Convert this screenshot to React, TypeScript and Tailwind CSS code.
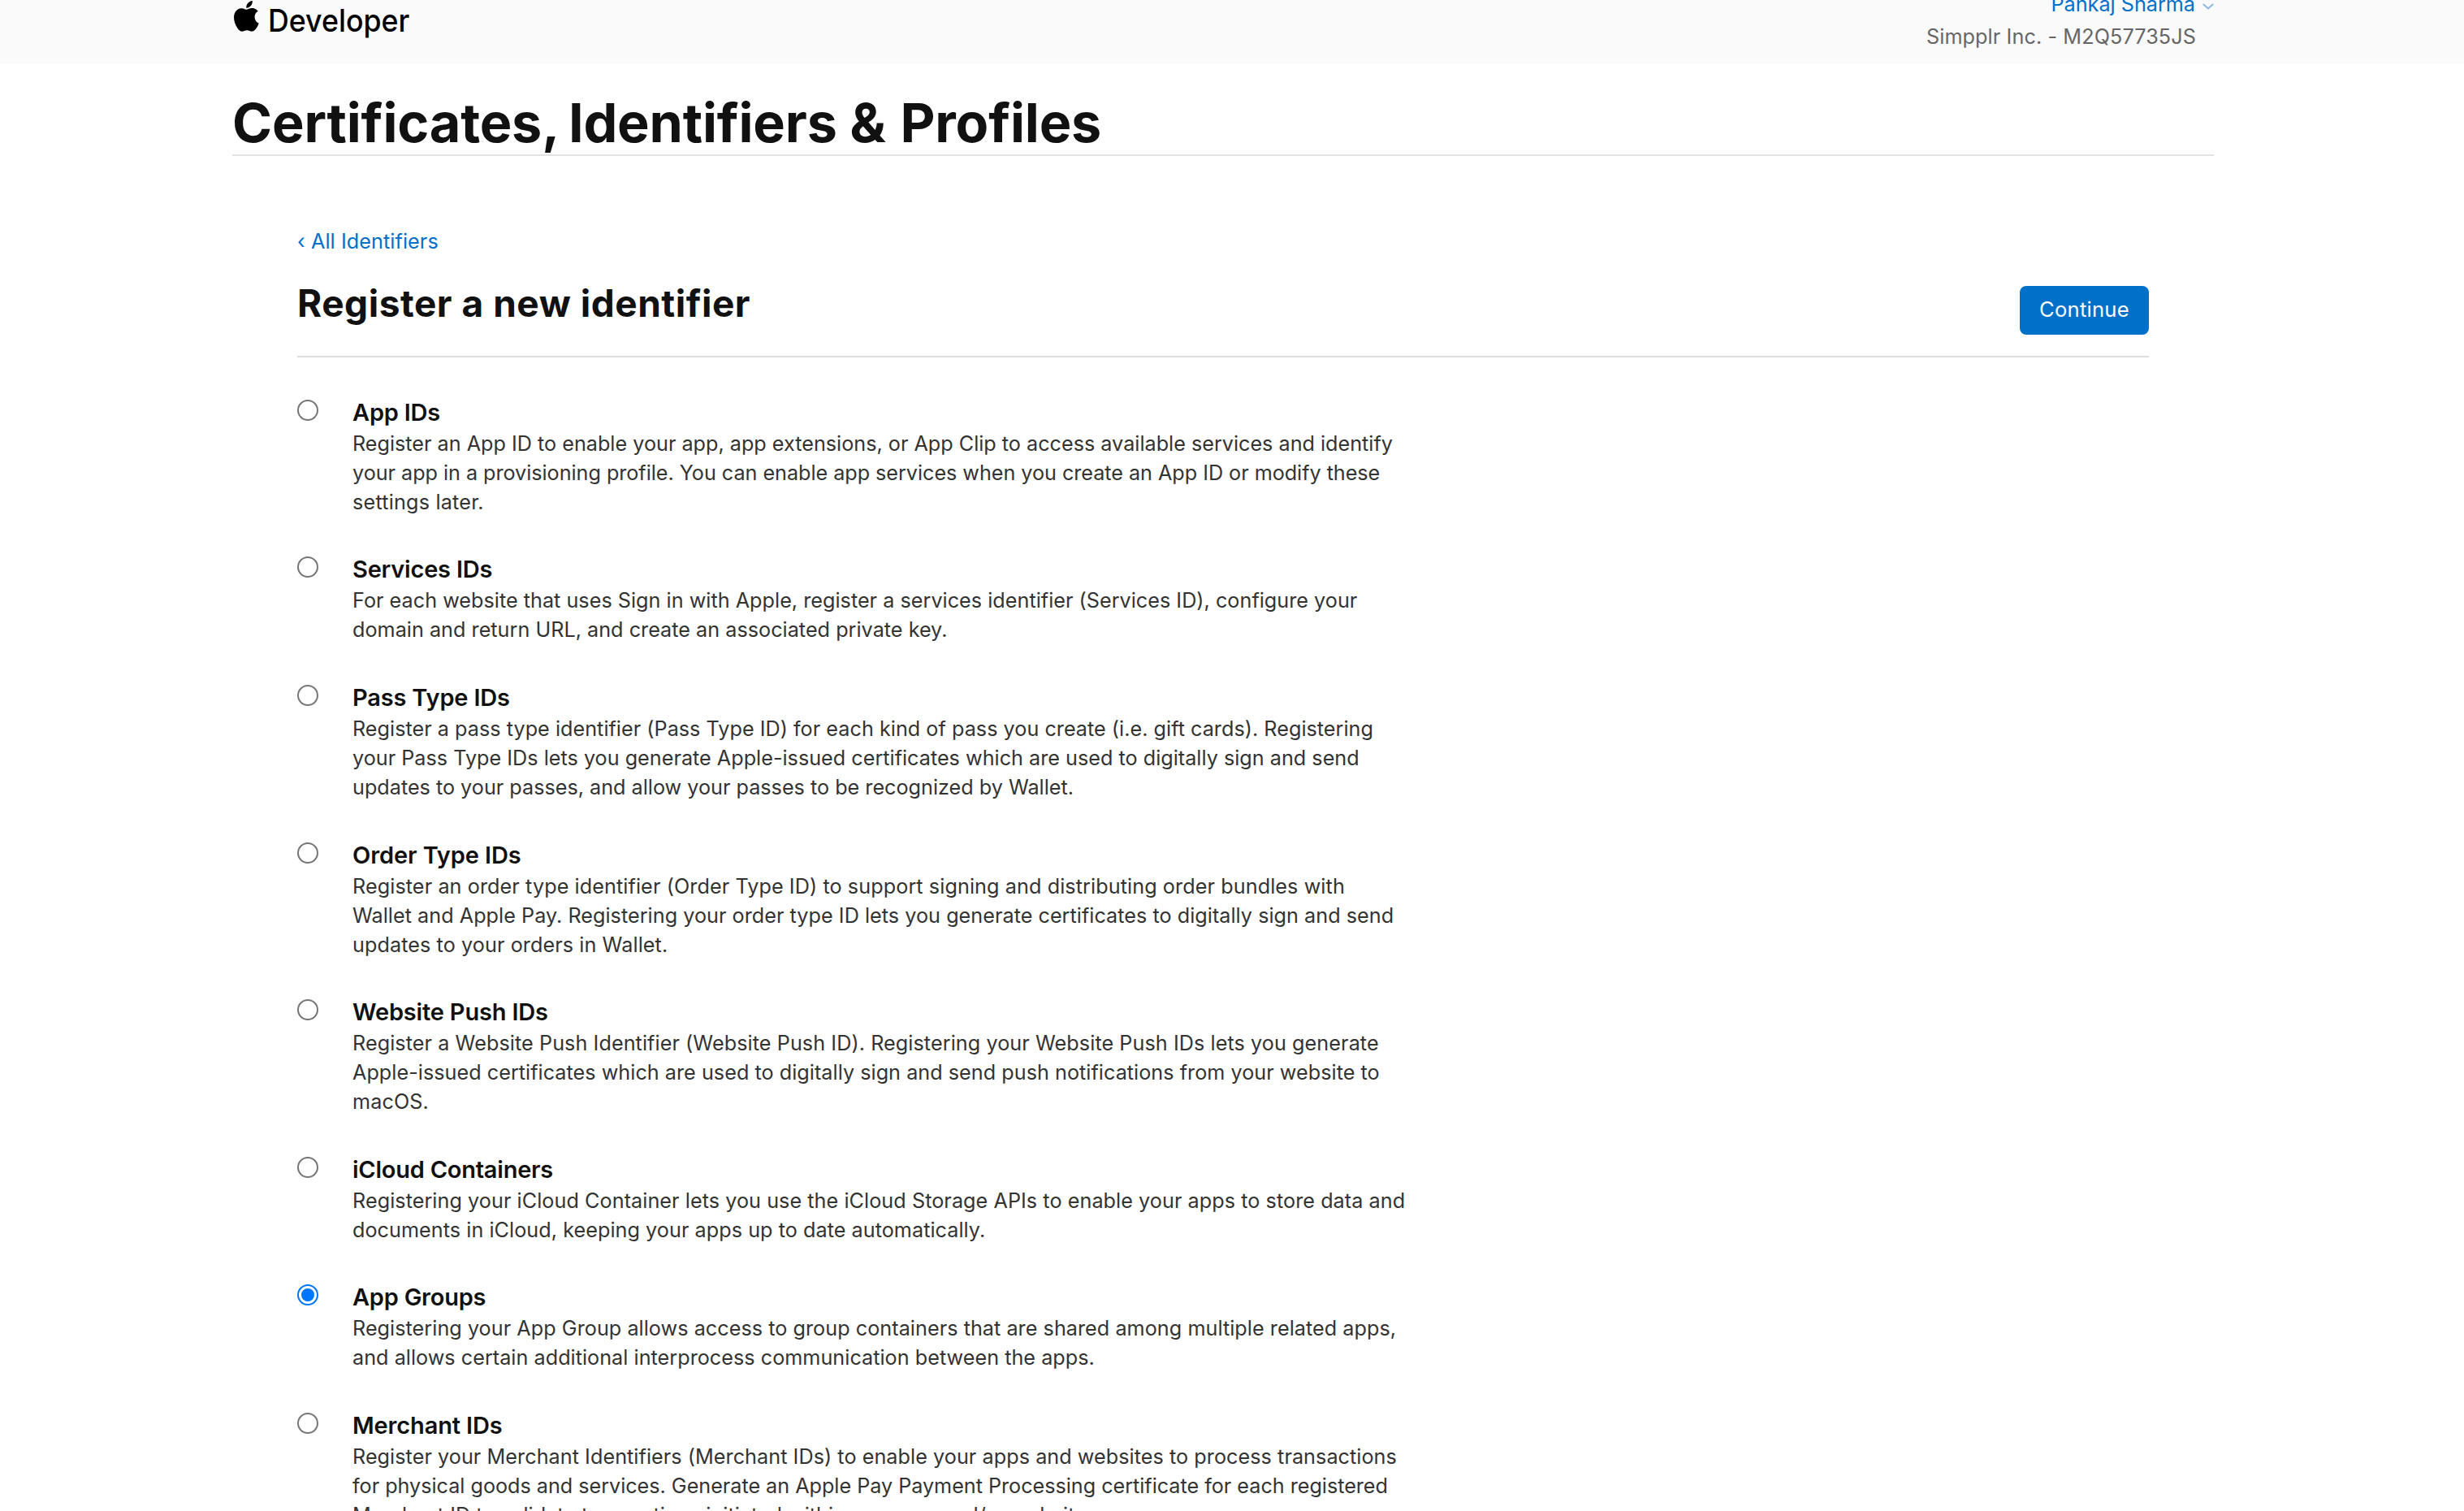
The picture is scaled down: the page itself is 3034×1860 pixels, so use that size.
import React, { useState } from "react";

type Line = { text: string; tracking?: string };
type Option = { title: string; titleTracking: string; lines: Line[] };

const OPTIONS: Option[] = [
  {
    title: "App IDs",
    titleTracking: "tracking-[-0.22px]",
    lines: [
      { text: "Register an App ID to enable your app, app extensions, or App Clip to access available services and identify" },
      { text: "your app in a provisioning profile. You can enable app services when you create an App ID or modify these", tracking: "tracking-[-0.035px]" },
      { text: "settings later.", tracking: "tracking-[0.2px]" },
    ],
  },
  {
    title: "Services IDs",
    titleTracking: "tracking-[-0.22px]",
    lines: [
      { text: "For each website that uses Sign in with Apple, register a services identifier (Services ID), configure your", tracking: "tracking-[0.02px]" },
      { text: "domain and return URL, and create an associated private key.", tracking: "tracking-[0.02px]" },
    ],
  },
  {
    title: "Pass Type IDs",
    titleTracking: "tracking-[-0.18px]",
    lines: [
      { text: "Register a pass type identifier (Pass Type ID) for each kind of pass you create (i.e. gift cards). Registering", tracking: "tracking-[0.025px]" },
      { text: "your Pass Type IDs lets you generate Apple-issued certificates which are used to digitally sign and send", tracking: "tracking-[0.01px]" },
      { text: "updates to your passes, and allow your passes to be recognized by Wallet." },
    ],
  },
  {
    title: "Order Type IDs",
    titleTracking: "tracking-[-0.1px]",
    lines: [
      { text: "Register an order type identifier (Order Type ID) to support signing and distributing order bundles with", tracking: "tracking-[0.085px]" },
      { text: "Wallet and Apple Pay. Registering your order type ID lets you generate certificates to digitally sign and send", tracking: "tracking-[0.03px]" },
      { text: "updates to your orders in Wallet.", tracking: "tracking-[0.08px]" },
    ],
  },
  {
    title: "Website Push IDs",
    titleTracking: "tracking-[-0.18px]",
    lines: [
      { text: "Register a Website Push Identifier (Website Push ID). Registering your Website Push IDs lets you generate", tracking: "tracking-[0.07px]" },
      { text: "Apple-issued certificates which are used to digitally sign and send push notifications from your website to", tracking: "tracking-[0.03px]" },
      { text: "macOS.", tracking: "tracking-[0.1px]" },
    ],
  },
  {
    title: "iCloud Containers",
    titleTracking: "tracking-[-0.24px]",
    lines: [
      { text: "Registering your iCloud Container lets you use the iCloud Storage APIs to enable your apps to store data and", tracking: "tracking-[0.055px]" },
      { text: "documents in iCloud, keeping your apps up to date automatically.", tracking: "tracking-[0.045px]" },
    ],
  },
  {
    title: "App Groups",
    titleTracking: "tracking-[-0.24px]",
    lines: [
      { text: "Registering your App Group allows access to group containers that are shared among multiple related apps,", tracking: "tracking-[0.04px]" },
      { text: "and allows certain additional interprocess communication between the apps.", tracking: "tracking-[0.025px]" },
    ],
  },
  {
    title: "Merchant IDs",
    titleTracking: "tracking-[-0.15px]",
    lines: [
      { text: "Register your Merchant Identifiers (Merchant IDs) to enable your apps and websites to process transactions", tracking: "tracking-[0.05px]" },
      { text: "for physical goods and services. Generate an Apple Pay Payment Processing certificate for each registered", tracking: "tracking-[-0.02px]" },
      { text: "Merchant ID to validate transactions initiated within your app and/or website." },
    ],
  },
];

function AppleLogo() {
  return (
    <svg viewBox="2.2 0 19.6 24" preserveAspectRatio="none" className="mt-px h-[37.7px] w-[30.7px] shrink-0 fill-black">
      <path d="M12.152 6.896c-.948 0-2.415-1.078-3.96-1.04-2.04.027-3.91 1.183-4.961 3.014-2.117 3.675-.546 9.103 1.519 12.09 1.013 1.454 2.208 3.09 3.792 3.039 1.52-.065 2.09-.987 3.935-.987 1.831 0 2.35.987 3.96.948 1.637-.026 2.676-1.48 3.676-2.948 1.156-1.688 1.636-3.325 1.662-3.415-.039-.013-3.182-1.221-3.22-4.857-.026-3.04 2.48-4.494 2.597-4.559-1.429-2.09-3.623-2.324-4.39-2.376-2-.156-3.675 1.09-4.61 1.09zM15.53 3.83c.843-1.012 1.4-2.427 1.245-3.83-1.207.052-2.662.805-3.532 1.818-.78.896-1.454 2.338-1.273 3.714 1.338.104 2.715-.688 3.559-1.701" />
    </svg>
  );
}

function Header() {
  return (
    <header className="h-[78px] bg-[#fafafa]">
      <div className="ml-[286px] flex w-[2440px] items-start justify-between">
        <div className="flex items-start pl-[2.4px]">
          <AppleLogo />
          <span className="ml-[11px] mt-[4.5px] origin-left scale-x-[0.928] text-[38.5px] font-medium leading-[40px] text-black">
            Developer
          </span>
        </div>
        <div className="-mt-[15px] flex flex-col items-end text-[25.2px] leading-[40px]">
          <a className="flex items-center text-[#0070c9]">
            Pankaj Sharma
            <svg viewBox="0 0 14 8" className="ml-[9px] mt-[5px] h-2 w-3.5 fill-none stroke-[#8ab8e6]">
              <path d="M0.8 1L7 6.5L13.2 1" strokeWidth="2" />
            </svg>
          </a>
          <span className="pr-[22px] tracking-[0.1px] text-[#666666]">Simpplr Inc. - M2Q57735JS</span>
        </div>
      </div>
    </header>
  );
}

function Radio({ checked }: { checked: boolean }) {
  return (
    <span
      className={
        "mt-1 flex size-[26px] shrink-0 items-center justify-center rounded-full border-2 bg-white " +
        (checked ? "border-[#0075ff]" : "border-[#767676]")
      }
    >
      {checked && <span className="size-4 rounded-full bg-[#0075ff]" />}
    </span>
  );
}

export default function App() {
  const [selected, setSelected] = useState("App Groups");

  return (
    <div className="h-[1860px] w-[3034px] overflow-hidden bg-white font-['Inter',sans-serif] text-[#333333]">
      <Header />
      <h1 className="ml-[286px] w-[2440px] border-b-2 border-[#e3e3e3] pt-[34px] text-[66.5px] font-bold leading-[78px] tracking-[-0.2px] text-[#111111]">
        Certificates<span className="tracking-[-5px]">,</span> Identifiers <span className="tracking-[2px]">&amp;</span> Profiles
      </h1>
      <main className="ml-[366px] w-[2280px] pt-[87px]">
        <a className="block text-[25.2px] leading-[36px] tracking-[0.08px] text-[#0070c9]">‹ All Identifiers</a>
        <div className="mt-7 flex h-[97px] items-start justify-between border-b-2 border-[#dddddd]">
          <h2 className="text-[46px] font-bold leading-[60px] tracking-[0.53px] text-[#111111]">
            Register a new identifier
          </h2>
          <button className="mt-[9px] h-[60px] w-[159px] rounded-lg bg-[#0070c9] pb-0.5 text-[25.6px] tracking-[0.24px] text-white">
            Continue
          </button>
        </div>
        <div className="mt-[47.85px] flex flex-col gap-[45.6px]">
          {OPTIONS.map((o) => (
            <div key={o.title} className="flex items-start" onClick={() => setSelected(o.title)}>
              <Radio checked={selected === o.title} />
              <div className="ml-[42px] whitespace-nowrap">
                <h3 className={"text-[29px] font-semibold leading-[40px] text-[#111111] " + o.titleTracking}>{o.title}</h3>
                {o.lines.map((l) => (
                  <p key={l.text} className={"text-[25.2px] leading-[36px] " + (l.tracking ?? "")}>
                    {l.text}
                  </p>
                ))}
              </div>
            </div>
          ))}
        </div>
      </main>
    </div>
  );
}
